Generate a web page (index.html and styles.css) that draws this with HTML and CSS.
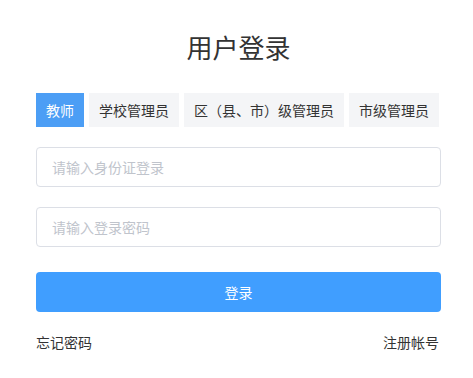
FILE: index.html
```html
<!DOCTYPE html>
<html lang="zh-CN">
<head>
<meta charset="utf-8">
<title>用户登录</title>
<link rel="stylesheet" href="styles.css">
</head>
<body>
<div class="login">
  <h1 class="title">用户登录</h1>
  <div class="tabs">
    <div class="tab active">教师</div>
    <div class="tab">学校管理员</div>
    <div class="tab">区（县、市）级管理员</div>
    <div class="tab">市级管理员</div>
  </div>
  <input class="field" type="text" placeholder="请输入身份证登录">
  <input class="field" type="password" placeholder="请输入登录密码">
  <button class="submit" type="button">登录</button>
  <div class="links">
    <a class="link">忘记密码</a>
    <a class="link">注册帐号</a>
  </div>
</div>
</body>
</html>
```
FILE: styles.css
```css
html, body {
  margin: 0;
  padding: 0;
  background: #fff;
}
body {
  font-family: "Noto Sans CJK SC", "Noto Sans", sans-serif;
  color: #333;
}
.login {
  width: 405px;
  margin-left: 36px;
  display: flex;
  flex-direction: column;
}
.title {
  margin: 29px 0 0;
  font-size: 26px;
  line-height: 36px;
  font-weight: normal;
  text-align: center;
  color: #333;
}
.tabs {
  margin-top: 28px;
  display: flex;
  gap: 5px;
}
.tab {
  height: 34px;
  line-height: 34px;
  padding: 0 10px;
  font-size: 14px;
  background: #f4f5f7;
  color: #333;
  white-space: nowrap;
}
.tab.active {
  background: #4c9ef5;
  color: #fff;
}
.field {
  box-sizing: border-box;
  margin: 20px 0 0;
  width: 100%;
  height: 40px;
  border: 1px solid #dcdfe6;
  border-radius: 4px;
  padding: 0 15px;
  font-family: inherit;
  font-size: 14px;
  color: #606266;
  outline: none;
}
.field::placeholder {
  color: #c0c4cc;
}
.submit {
  margin-top: 25px;
  height: 40px;
  width: 100%;
  border: none;
  border-radius: 4px;
  background: #409eff;
  color: #fff;
  font-family: inherit;
  font-size: 14px;
  padding: 0;
}
.links {
  margin-top: 20px;
  display: flex;
  justify-content: space-between;
  font-size: 14px;
  line-height: 20px;
  padding-right: 2px;
}
.link {
  color: #333;
}
```
